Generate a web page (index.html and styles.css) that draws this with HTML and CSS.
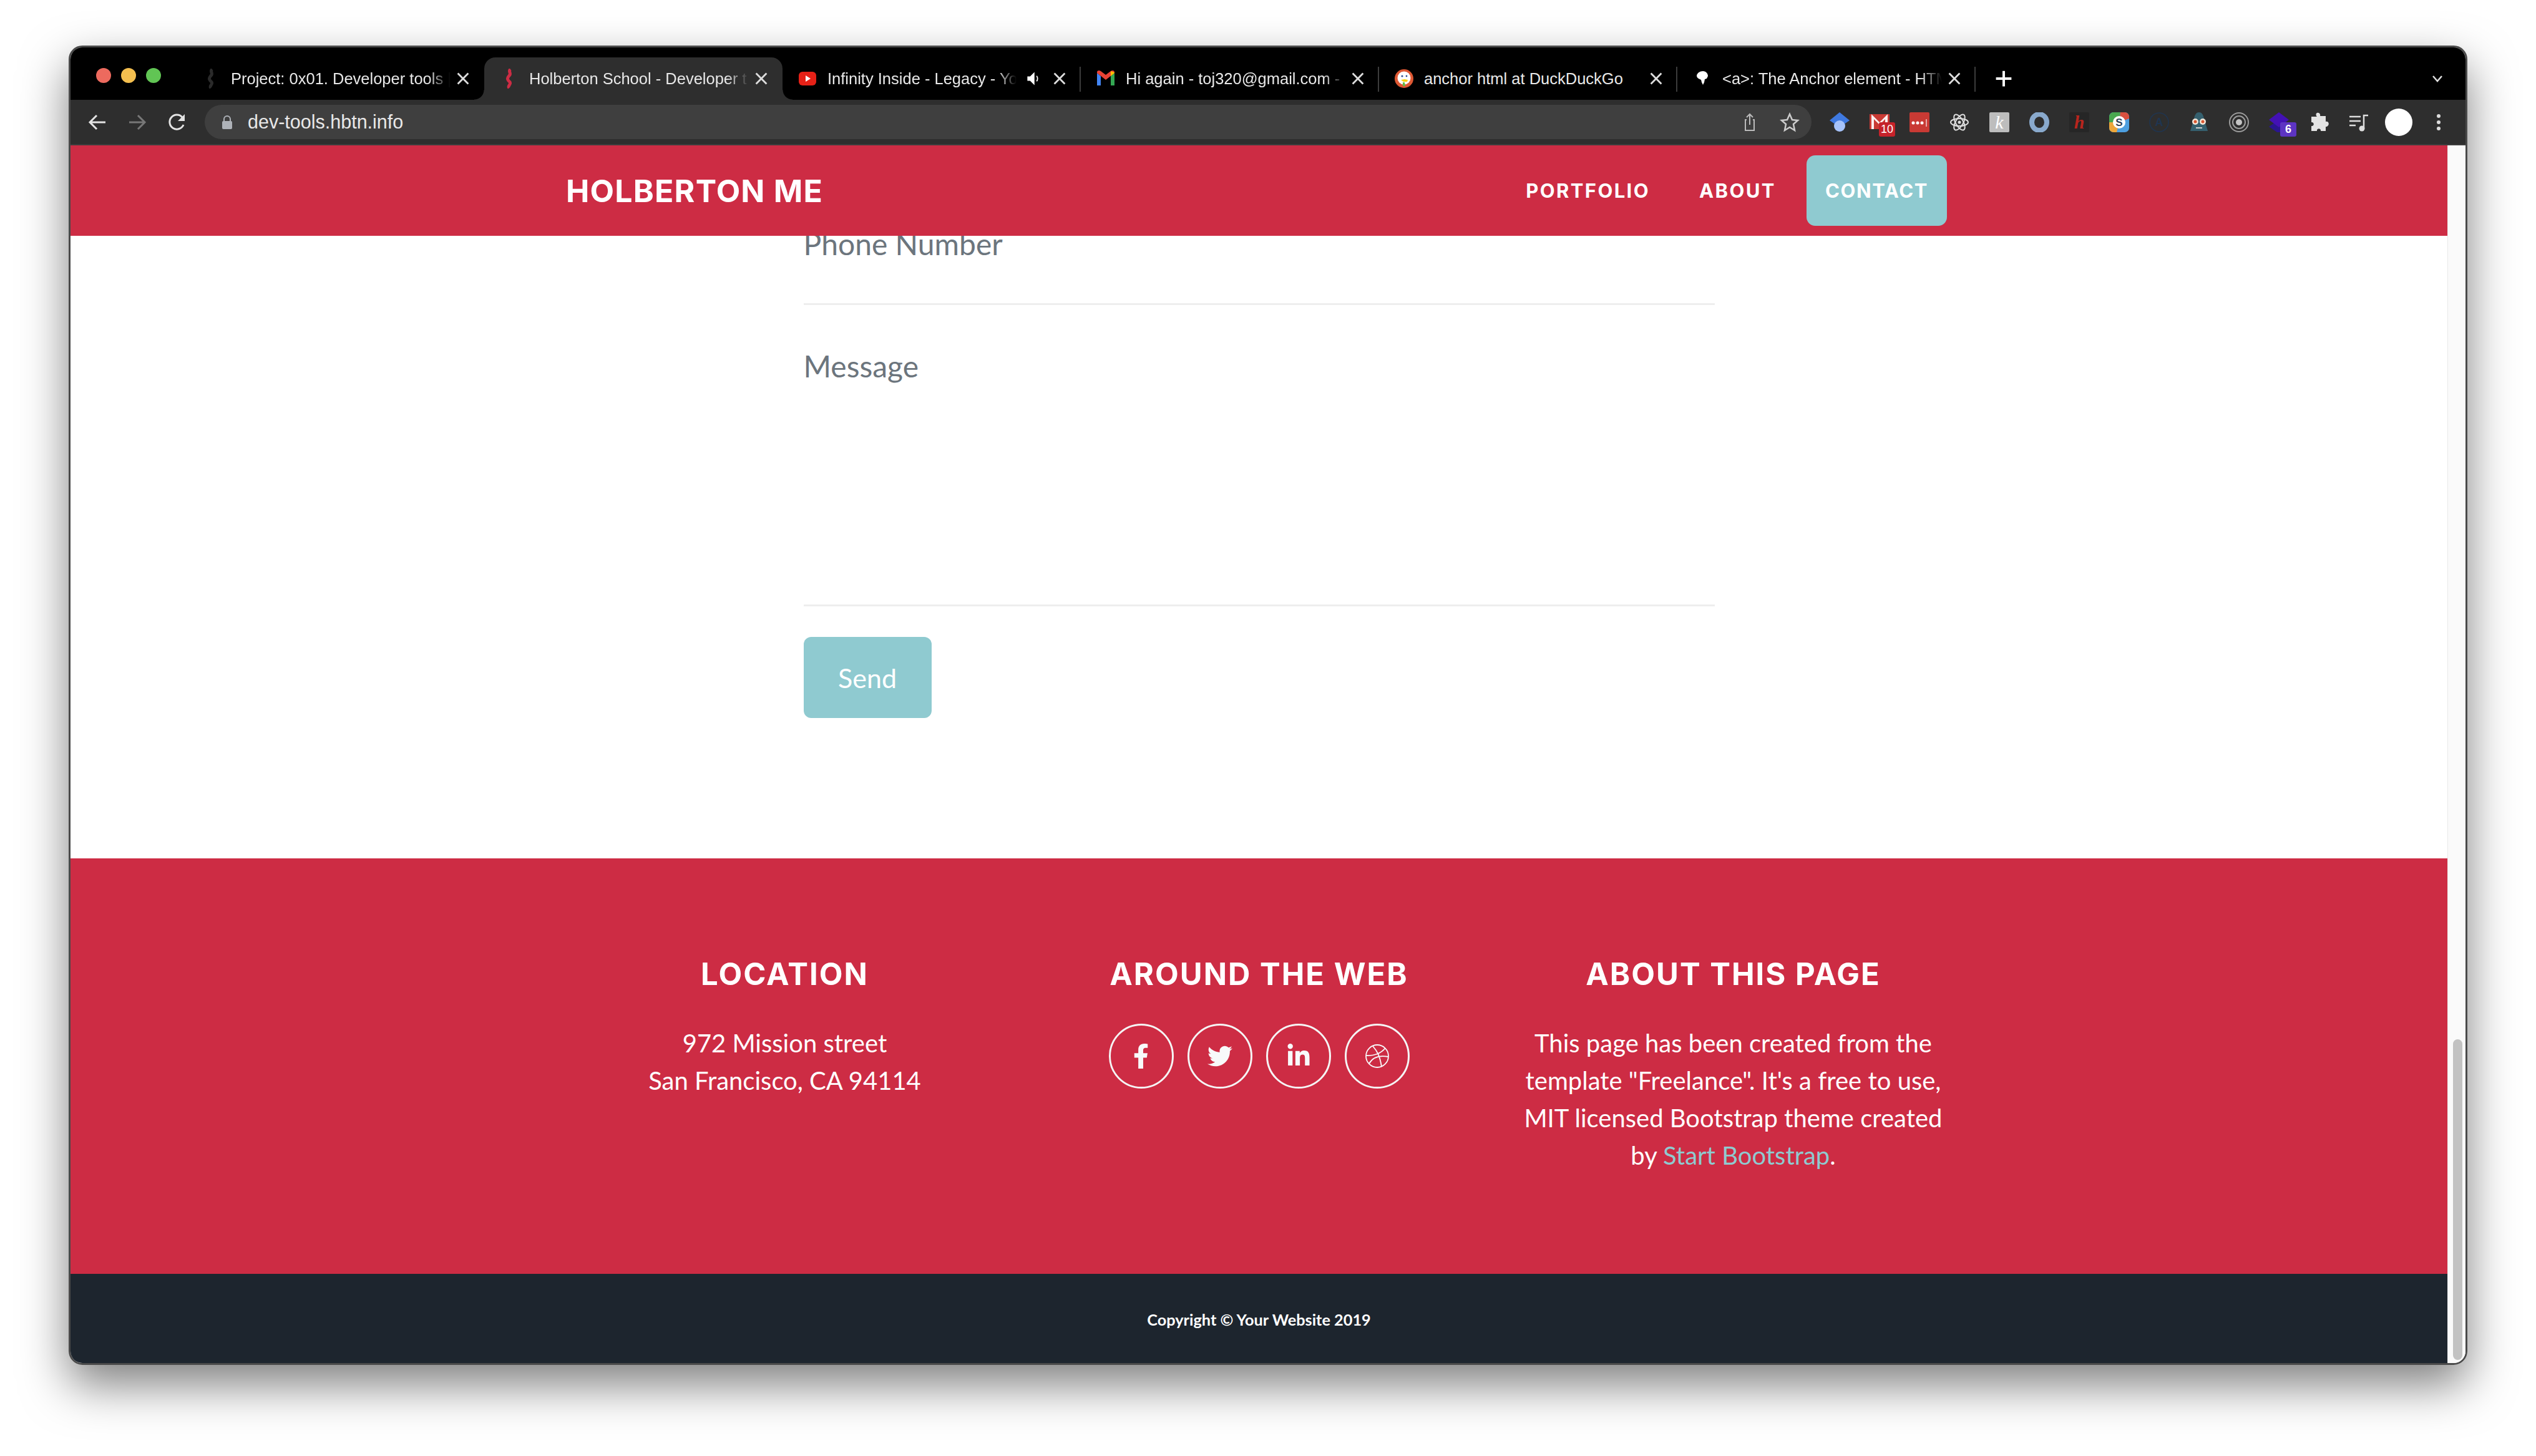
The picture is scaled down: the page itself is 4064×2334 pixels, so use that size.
FILE: index.html
```html
<!DOCTYPE html>
<html lang="en">

<head>
  <title>Holberton School - Developer tools</title>
  <meta name="viewport" content="width=device-width, initial-scale=1">
  <link rel="stylesheet" href="styles.css">
</head>

<body>
  <div class="window">

    <!-- Tab strip -->
    <div class="tabstrip">
      <div class="lights">
        <span class="light red"></span>
        <span class="light yellow"></span>
        <span class="light green"></span>
      </div>
      <div class="tab">
        <svg class="favicon" viewBox="0 0 32 32"><path d="M18 1c-4 3 1 6-1 9s-5 4-3 8 5 3 3 7-3 4-1 6" fill="none" stroke="#2a2a2a" stroke-width="5"/></svg>
        <span class="tab-title">Project: 0x01. Developer tools |</span>
        <svg class="tab-close" viewBox="0 0 20 20"><path d="M3 3l14 14M17 3L3 17"/></svg>
      </div>
      <div class="tab active">
        <svg class="favicon" viewBox="0 0 32 32"><path d="M18 1c-4 3 1 6-1 9s-5 4-3 8 5 3 3 7-3 4-1 6" fill="none" stroke="#cd2c44" stroke-width="5"/></svg>
        <span class="tab-title">Holberton School - Developer t</span>
        <svg class="tab-close" viewBox="0 0 20 20"><path d="M3 3l14 14M17 3L3 17"/></svg>
      </div>
      <div class="tab sep">
        <svg class="favicon" viewBox="0 0 32 32"><rect x="2" y="5" width="28" height="22" rx="6" fill="#e62117"/><path d="M13 11l8 5-8 5z" fill="#fff"/></svg>
        <span class="tab-title short">Infinity Inside - Legacy - Yo</span>
        <svg class="tab-audio" viewBox="0 0 32 32"><path d="M5 12h5l8-8v24l-8-8H5z" fill="#fff"/><path d="M22 11c2 3 2 7 0 10" fill="none" stroke="#fff" stroke-width="2"/></svg>
        <svg class="tab-close" viewBox="0 0 20 20"><path d="M3 3l14 14M17 3L3 17"/></svg>
      </div>
      <div class="tab sep">
        <svg class="favicon" viewBox="0 0 32 32">
          <path d="M2 7v20h6V12z" fill="#4285f4"/>
          <path d="M24 12v15h6V7z" fill="#34a853"/>
          <path d="M2 7l14 11L30 7v-1c0-3-3-4-6-2l-8 6-8-6C5 2 2 3 2 6z" fill="#ea4335"/>
          <path d="M24 4l6 2v1l-6 5z" fill="#fbbc04"/>
        </svg>
        <span class="tab-title">Hi again - toj320@gmail.com -</span>
        <svg class="tab-close" viewBox="0 0 20 20"><path d="M3 3l14 14M17 3L3 17"/></svg>
      </div>
      <div class="tab sep">
        <svg class="favicon" viewBox="0 0 32 32"><circle cx="16" cy="16" r="15" fill="#de5833"/><circle cx="16" cy="15" r="10.5" fill="#fff"/><circle cx="13" cy="12" r="1.6" fill="#2d4f8e"/><circle cx="20" cy="12" r="1.4" fill="#2d4f8e"/><path d="M11 18l6-1 5 1-1 3-6 0z" fill="#fdd20a"/><path d="M14 22l3 0 1 6-4 0z" fill="#65bc46"/></svg>
        <span class="tab-title plain">anchor html at DuckDuckGo</span>
        <svg class="tab-close" viewBox="0 0 20 20"><path d="M3 3l14 14M17 3L3 17"/></svg>
      </div>
      <div class="tab sep">
        <svg class="favicon" viewBox="0 0 32 32"><path d="M7 11c1-4 5-7 10-7 5 0 8 4 8 8l-2 4-3 1-1 5-2 4-2-4-1-4-4-2c-2-1-3-3-3-5z" fill="#fff"/></svg>
        <span class="tab-title">&lt;a&gt;: The Anchor element - HTM</span>
        <svg class="tab-close" viewBox="0 0 20 20"><path d="M3 3l14 14M17 3L3 17"/></svg>
      </div>
      <svg class="new-tab" viewBox="0 0 32 32"><path d="M16 5v22M5 16h22" stroke="#fff" stroke-width="3.500"/></svg>
      <svg class="tab-list" viewBox="0 0 32 32"><path d="M9 12l7 8 7-8" fill="none" stroke="#ddd" stroke-width="2.500"/></svg>
    </div>

    <!-- Toolbar -->
    <div class="toolbar">
      <svg class="tool" viewBox="0 0 32 32"><path d="M29 16H4M15 5L4 16l11 11" fill="none" stroke="#e3e3e3" stroke-width="3"/></svg>
      <svg class="tool" viewBox="0 0 32 32"><path d="M3 16h25M17 5l11 11-11 11" fill="none" stroke="#777" stroke-width="3"/></svg>
      <svg class="tool" viewBox="0 0 32 32"><path d="M26 20a11.500 11.500 0 1 1-2-12" fill="none" stroke="#e3e3e3" stroke-width="3"/><path d="M28 3v11H17z" fill="#e3e3e3"/></svg>

      <div class="omnibox">
        <svg class="lock" viewBox="0 0 18 24"><path d="M4 10V7a5 5 0 0 1 10 0v3" fill="none" stroke="#aeb2b8" stroke-width="2"/><rect x="1" y="10" width="16" height="13" rx="2" fill="#aeb2b8"/></svg>
        <span class="url">dev-tools.hbtn.info</span>
        <svg class="tool" viewBox="0 0 32 32"><path d="M11 12H9v17h14V12h-2M16 20V3M11 8l5-5 5 5" fill="none" stroke="#bbb" stroke-width="2"/></svg>
        <svg class="tool" viewBox="0 0 32 32"><path d="M16 3l4 9 9 1-7 6 2 10-8-5-8 5 2-10-7-6 9-1z" fill="none" stroke="#ccc" stroke-width="2.500"/></svg>
      </div>

      <div class="extensions">
        <span class="ext"><svg viewBox="0 0 32 32"><path d="M16 0L32 13 16 24 0 13z" fill="#3f79e0"/><circle cx="16" cy="22" r="9" fill="#a6c3fb"/></svg></span>
        <span class="ext"><svg viewBox="0 0 32 32"><rect y="3" width="32" height="24" fill="#c93a34"/><path d="M3 3l13 13L29 3v24h-4V11l-9 9-9-9v16H3z" fill="#fff" opacity=".92"/></svg><b class="badge badge-red">10</b></span>
        <span class="ext"><svg viewBox="0 0 32 32"><rect width="32" height="32" rx="2" fill="#c93a34"/><circle cx="6" cy="17" r="2.500" fill="#fff"/><circle cx="13" cy="17" r="2.500" fill="#fff"/><circle cx="20" cy="17" r="2.500" fill="#fff"/><path d="M27 11v12" stroke="#ecc" stroke-width="1.500"/></svg></span>
        <span class="ext"><svg viewBox="0 0 32 32"><g fill="none" stroke="#ddd" stroke-width="2"><ellipse cx="16" cy="16" rx="14" ry="6"/><ellipse cx="16" cy="16" rx="14" ry="6" transform="rotate(60 16 16)"/><ellipse cx="16" cy="16" rx="14" ry="6" transform="rotate(120 16 16)"/></g><circle cx="16" cy="16" r="2.500" fill="#ddd"/></svg></span>
        <span class="ext"><i class="ext-k">k</i></span>
        <span class="ext"><svg viewBox="0 0 32 32"><ellipse cx="16" cy="16" rx="12" ry="13" fill="none" stroke="#89a9cc" stroke-width="8"/></svg></span>
        <span class="ext"><i class="ext-h">h</i></span>
        <span class="ext"><svg viewBox="0 0 32 32"><rect width="32" height="32" rx="7" fill="#4d9fe0"/><path d="M0 7a7 7 0 0 1 7-7h11l-2 16H0z" fill="#4aa84f"/><path d="M18 0h7a7 7 0 0 1 7 7v3l-16 6z" fill="#d9503f"/><path d="M0 16h16l-4 16H7a7 7 0 0 1-7-7z" fill="#eda63a"/><circle cx="16" cy="16" r="10" fill="#fff"/><text class="ext-s" x="16" y="22" text-anchor="middle">S</text></svg></span>
        <span class="ext"><svg viewBox="0 0 32 32"><circle cx="16" cy="16" r="15" fill="none" stroke="#1f3550" stroke-width="1.500"/><text class="ext-a" x="16" y="22" text-anchor="middle">A</text></svg></span>
        <span class="ext"><svg viewBox="0 0 32 32"><path d="M16 0c5 0 7 5 8 10l6 20H2l6-20C9 5 11 0 16 0z" fill="#35606e"/><circle cx="10" cy="15" r="5" fill="#f2e6d8"/><circle cx="22" cy="15" r="5" fill="#f2e6d8"/><circle cx="10" cy="15" r="2.500" fill="#d9562f"/><circle cx="22" cy="15" r="2.500" fill="#d9562f"/><path d="M11 25h10" stroke="#ccc" stroke-width="2"/></svg></span>
        <span class="ext"><svg viewBox="0 0 32 32"><g fill="none" stroke="#9c9c9c" stroke-width="2"><circle cx="16" cy="16" r="15"/><circle cx="16" cy="16" r="10"/></g><circle cx="16" cy="16" r="5" fill="#c4c4c4"/></svg></span>
        <span class="ext"><svg viewBox="0 0 32 32"><path d="M16 12L32 23 16 34 0 23z" fill="#2a1590"/><path d="M16 0L32 12 16 24 0 12z" fill="#4311b5"/></svg><b class="badge badge-purple">6</b></span>
        <span class="ext"><svg viewBox="0 0 32 32"><path d="M13 1c3-1 6 1 5 5h9v9c4-1 6 3 4 6s-4 2-4 2v7h-8c1-5-7-5-6 0H4v-8c5 1 5-7 0-6V7h9c-2-2-2-5 0-6z" fill="#e3e3e3"/></svg></span>
        <span class="ext"><svg viewBox="0 0 32 32"><path d="M1 7h18M1 14h18M1 21h10" stroke="#ddd" stroke-width="2.500"/><path d="M24 26V5h7" fill="none" stroke="#ddd" stroke-width="2.500"/><circle cx="21" cy="26" r="4.500" fill="#ddd"/></svg></span>
        <span class="avatar"></span>
        <span class="ext"><svg viewBox="0 0 32 32"><circle cx="16" cy="6" r="3" fill="#ddd"/><circle cx="16" cy="16" r="3" fill="#ddd"/><circle cx="16" cy="26" r="3" fill="#ddd"/></svg></span>
      </div>
    </div>

    <!-- Page -->
    <div class="viewport">
      <div class="page">

        <header class="navbar">
          <a class="brand">HOLBERTON ME</a>
          <nav class="nav-links">
            <a class="nav-link">PORTFOLIO</a>
            <a class="nav-link">ABOUT</a>
            <a class="nav-link current">CONTACT</a>
          </nav>
        </header>

        <main class="contact">
          <form class="contact-form">
            <div class="field">Phone Number</div>
            <div class="field message">Message</div>
            <button type="button" class="send-btn">Send</button>
          </form>
        </main>

        <footer class="footer">
          <div class="footer-col">
            <h4>LOCATION</h4>
            <p>972 Mission street<br>San Francisco, CA 94114</p>
          </div>
          <div class="footer-col">
            <h4>AROUND THE WEB</h4>
            <div class="socials">
              <a class="social"><svg viewBox="0 0 320 512" width="25" height="40"><path d="M279.14 288l14.22-92.66h-88.91v-60.13c0-25.35 12.42-50.06 52.24-50.06h40.42V6.26S260.43 0 225.36 0c-73.22 0-121.08 44.38-121.08 124.72v70.62H22.89V288h81.39v224h100.17V288z"/></svg></a>
              <a class="social"><svg viewBox="0 0 512 512" width="40" height="40"><path d="M459.37 151.716c.325 4.548.325 9.097.325 13.645 0 138.72-105.583 298.558-298.558 298.558-59.452 0-114.68-17.219-161.137-47.106 8.447.974 16.568 1.299 25.34 1.299 49.055 0 94.213-16.568 130.274-44.832-46.132-.975-84.792-31.188-98.112-72.772 6.498.974 12.995 1.624 19.818 1.624 9.421 0 18.843-1.3 27.614-3.573-48.081-9.747-84.143-51.98-84.143-102.985v-1.299c13.969 7.797 30.214 12.67 47.431 13.319-28.264-18.843-46.781-51.005-46.781-87.391 0-19.492 5.197-37.36 14.294-52.954 51.655 63.675 129.3 105.258 216.365 109.807-1.624-7.797-2.599-15.918-2.599-24.04 0-57.828 46.782-104.934 104.934-104.934 30.213 0 57.502 12.67 76.67 33.137 23.715-4.548 46.456-13.32 66.599-25.34-7.798 24.366-24.366 44.833-46.132 57.827 21.117-2.273 41.584-8.122 60.426-16.243-14.292 20.791-32.161 39.308-52.628 54.253z"/></svg></a>
              <a class="social"><svg viewBox="0 0 448 512" width="36" height="40"><path d="M100.28 448H7.4V148.9h92.88zM53.79 108.1C24.09 108.1 0 83.5 0 53.8a53.79 53.79 0 0 1 107.58 0c0 29.7-24.1 54.3-53.79 54.3zM447.9 448h-92.68V302.4c0-34.7-.7-79.2-48.29-79.2-48.29 0-55.69 37.7-55.69 76.7V448h-92.78V148.9h89.08v40.8h1.3c12.4-23.5 42.69-48.3 87.88-48.3 94 0 111.28 61.9 111.28 142.3V448z"/></svg></a>
              <a class="social"><svg class="dribbble" viewBox="0 0 40 40" width="40" height="40"><circle cx="20" cy="20" r="18"/><path d="M13 4c6 7 11 14 14 33M2 19c12 1 24-3 31-12M7 32c5-9 15-14 31-11"/></svg></a>
            </div>
          </div>
          <div class="footer-col">
            <h4>ABOUT THIS PAGE</h4>
            <p>This page has been created from the<br>template "Freelance". It's a free to use,<br>MIT licensed Bootstrap theme created<br>by <a class="footer-link">Start Bootstrap</a>.</p>
          </div>
        </footer>

        <div class="copyright">Copyright &copy; Your Website 2019</div>
      </div>

      <div class="scrollbar"><div class="thumb"></div></div>
    </div>
  </div>
</body>

</html>
```

FILE: styles.css
```css
* {
  box-sizing: border-box;
  margin: 0;
  padding: 0;
}

body {
  width: 4064px;
  height: 2334px;
  padding: 73px 110px 146px;
  background: #fff;
  font-family: 'Lato', sans-serif;
  overflow: hidden;
}

.window {
  display: flex;
  flex-direction: column;
  height: 100%;
  border: 3px solid #4a4a4a;
  border-radius: 22px;
  overflow: hidden;
  box-shadow: 0 32px 75px rgba(0, 0, 0, 0.5);
}

/* Tab strip */
.tabstrip {
  display: flex;
  align-items: flex-end;
  height: 84px;
  background: #000;
  flex-shrink: 0;
}

.lights {
  display: flex;
  align-self: flex-start;
  gap: 16px;
  width: 185px;
  padding: 33px 0 0 41px;
}

.light {
  width: 24px;
  height: 24px;
  border-radius: 50%;
}

.red { background: #ed6a5e; }
.yellow { background: #f4bf4f; }
.green { background: #61c554; }

.tab {
  position: relative;
  display: flex;
  align-items: center;
  width: 478px;
  height: 68px;
  padding: 0 22px 0 24px;
  color: #e8e8e8;
  font-family: 'Liberation Sans', Arial, sans-serif;
  font-size: 25.5px;
}

.tab.active {
  background: #2e2e2e;
  border-radius: 18px 18px 0 0;
}

.tab.active::before,
.tab.active::after {
  content: "";
  position: absolute;
  bottom: 0;
  width: 16px;
  height: 16px;
}

.tab.active::before {
  left: -16px;
  background: radial-gradient(circle at 0 0, transparent 15px, #2e2e2e 16px);
}

.tab.active::after {
  right: -16px;
  background: radial-gradient(circle at 100% 0, transparent 15px, #2e2e2e 16px);
}

.tab.sep::after {
  content: "";
  position: absolute;
  right: 0;
  top: 15px;
  height: 40px;
  border-right: 2px solid #3c3c3c;
}

.favicon {
  width: 32px;
  height: 32px;
  margin-right: 16px;
  flex-shrink: 0;
}

.tab-title {
  flex: 1;
  min-width: 0;
  white-space: nowrap;
  -webkit-mask-image: linear-gradient(to right, #000 90%, transparent 100%);
  mask-image: linear-gradient(to right, #000 90%, transparent 100%);
}

.tab-title.plain {
  -webkit-mask-image: none;
  mask-image: none;
}

.tab-title.short {
  flex: none;
  width: 303px;
}

.tab-audio {
  width: 28px;
  height: 28px;
  margin-left: 13px;
  margin-right: auto;
}

.tab-close {
  width: 24px;
  height: 24px;
  margin-left: 8px;
  fill: none;
  stroke: #ddd;
  stroke-width: 2.4;
  flex-shrink: 0;
}

.new-tab {
  width: 36px;
  height: 36px;
  margin: 0 0 16px 27px;
}

.tab-list {
  width: 32px;
  height: 32px;
  margin: 0 29px 18px auto;
}

/* Toolbar */
.toolbar {
  display: flex;
  align-items: center;
  height: 73px;
  padding: 0 11px;
  background: #2e2e2e;
  border-bottom: 2px solid #3d3d3d;
  flex-shrink: 0;
}

.tool {
  width: 32px;
  height: 32px;
  margin: 0 16px;
  flex-shrink: 0;
}

.omnibox {
  display: flex;
  align-items: center;
  flex: 1;
  height: 55px;
  margin: 0 13px 0 12px;
  padding-left: 27px;
  padding-right: 3px;
  background: #3f3f3f;
  border-radius: 28px;
}

.lock {
  width: 18px;
  height: 24px;
  margin-right: 24px;
}

.url {
  flex: 1;
  color: #e8e8e8;
  font-family: 'Liberation Sans', Arial, sans-serif;
  font-size: 30.5px;
}

.extensions {
  display: flex;
  align-items: center;
}

.ext {
  position: relative;
  display: flex;
  justify-content: center;
  align-items: center;
  width: 64px;
  height: 40px;
}

.ext svg {
  width: 32px;
  height: 32px;
}

.badge {
  position: absolute;
  left: 31px;
  top: 20px;
  min-width: 26px;
  padding: 1px 2px;
  border-radius: 3px;
  color: #fff;
  font-family: 'Liberation Sans', Arial, sans-serif;
  font-size: 18px;
  font-weight: 400;
  text-align: center;
}

.badge-red { background: #c5222a; }
.badge-purple { left: 34px; background: #5d34c2; font-weight: 700; }

.ext-k,
.ext-h {
  display: flex;
  justify-content: center;
  align-items: center;
  width: 32px;
  height: 32px;
  border-radius: 2px;
  font-family: 'Liberation Serif', serif;
  font-size: 30px;
}

.ext-k { background: #bdbdbd; color: #fff; }
.ext-h { background: #262626; color: #b8251d; font-weight: 700; }

.ext-s {
  fill: #2f3f55;
  font-family: 'Liberation Sans', sans-serif;
  font-size: 17px;
  font-weight: 700;
}

.ext-a {
  fill: #1f3550;
  font-family: 'Liberation Sans', sans-serif;
  font-size: 18px;
  font-weight: 700;
}

.avatar {
  width: 44px;
  height: 44px;
  margin: 0 10px;
  background: #fff;
  border-radius: 50%;
}

/* Page */
.viewport {
  display: flex;
  flex: 1;
  min-height: 0;
}

.page {
  display: flex;
  flex-direction: column;
  flex: 1;
  min-width: 0;
}

.navbar {
  display: flex;
  justify-content: space-between;
  align-items: center;
  height: 145px;
  padding: 0 802px 0 794px;
  background: #cd2c44;
  flex-shrink: 0;
}

.brand {
  color: #fff;
  font-family: 'Inter', sans-serif;
  font-size: 50px;
  font-weight: 700;
  letter-spacing: 1.2px;
}

.nav-links {
  display: flex;
  align-items: center;
}

.nav-link {
  margin-right: 79px;
  color: #fff;
  font-family: 'Inter', sans-serif;
  font-size: 31px;
  font-weight: 700;
  letter-spacing: 2.4px;
}

.nav-link.current {
  margin: 0 0 0 -30px;
  padding: 38px 30px;
  background: #8fcad0;
  border-radius: 14px;
  letter-spacing: 1.6px;
}

.contact {
  flex: 1;
  min-height: 0;
  overflow: hidden;
}

.contact-form {
  width: 1460px;
  margin: -25px auto 0;
}

.field {
  height: 136px;
  color: #6c757d;
  font-size: 48px;
  line-height: 75px;
  border-bottom: 3px solid #eee;
}

.field.message {
  height: 423px;
  margin-top: 60px;
}

.send-btn {
  display: block;
  width: 205px;
  height: 130px;
  margin-top: 49px;
  background: #8fcad0;
  border: none;
  border-radius: 12px;
  color: #fff;
  font-family: 'Lato', sans-serif;
  font-size: 43px;
  font-weight: 400;
}

.footer {
  display: grid;
  grid-template-columns: repeat(3, 760px);
  justify-content: center;
  height: 666px;
  padding-top: 157px;
  background: #cd2c44;
  color: #fff;
  text-align: center;
  flex-shrink: 0;
}

.footer h4 {
  margin-bottom: 50px;
  font-family: 'Inter', sans-serif;
  font-size: 49px;
  font-weight: 700;
  line-height: 1.2;
  letter-spacing: 2px;
}

.footer p {
  font-size: 40px;
  line-height: 60px;
}

.footer-link {
  color: #8fcad0;
}

.socials {
  display: flex;
  justify-content: center;
  gap: 22px;
  margin-top: -1px;
}

.social {
  display: flex;
  justify-content: center;
  align-items: center;
  width: 104px;
  height: 104px;
  border: 3px solid #f5f5f5;
  border-radius: 50%;
}

.social svg {
  fill: #f8f9fa;
}

.social .dribbble {
  fill: none;
  stroke: #f8f9fa;
  stroke-width: 1.800;
}

.copyright {
  display: flex;
  justify-content: center;
  align-items: center;
  flex: none;
  height: 143px;
  padding-top: 2px;
  background: #1d252e;
  color: #fff;
  font-size: 25.3px;
  font-weight: 700;
}

.scrollbar {
  display: flex;
  width: 29px;
  padding: 1433px 5px 5px 8px;
  background: #fafafa;
  border-left: 1px solid #e8e8e8;
  flex-shrink: 0;
}

.thumb {
  flex: 1;
  background: #c2c2c2;
  border-radius: 8px;
}
```
